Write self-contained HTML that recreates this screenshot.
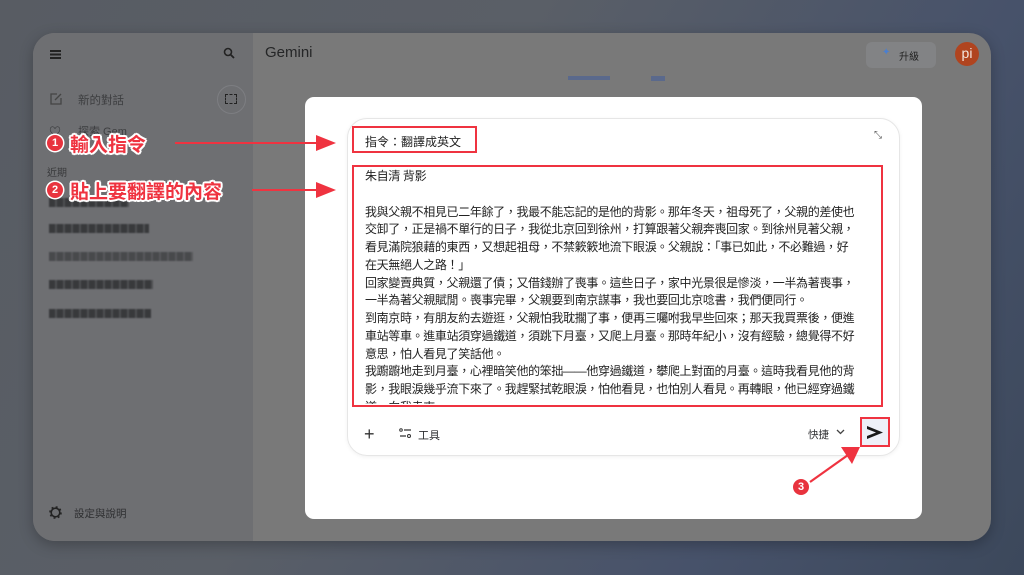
<!DOCTYPE html>
<html><head><meta charset="utf-8"><style>
*{margin:0;padding:0;box-sizing:border-box}
body{width:1024px;height:575px;overflow:hidden;position:relative;font-family:"Liberation Sans","Noto Sans CJK TC",sans-serif;background:linear-gradient(120deg,#585c63 0%,#5a5f67 40%,#47526a 75%,#3c485b 100%)}
.win{position:absolute;left:33px;top:33px;width:958px;height:508px;border-radius:22px;overflow:hidden;background:#797979;box-shadow:0 4px 14px rgba(0,0,0,.25)}
.side{position:absolute;left:0;top:0;width:220px;height:508px;background:#6e6f72}
.t{position:absolute;color:#2e2f31;font-size:11px}
.blur{position:absolute;height:9px;background:repeating-linear-gradient(90deg,#2f3032 0 6px,#4a4b4e 6px 8px);opacity:.85;filter:blur(.7px)}
.modal{position:absolute;left:305px;top:97px;width:617px;height:422px;background:#fff;border-radius:9px}
.card{position:absolute;left:347px;top:118px;width:553px;height:338px;border:1px solid #e6e6e6;border-radius:20px;box-shadow:0 1px 4px rgba(0,0,0,.06)}
.red{position:absolute;border:2px solid #ef3340}
.txt{position:absolute;left:365px;top:168px;font-size:12px;letter-spacing:-.35px;line-height:17.75px;color:#222;width:510px;height:236px;overflow:hidden;white-space:nowrap}
.ann{position:absolute;font-weight:bold;font-size:19px;color:#ef3340;text-shadow:0 0 2px #fff,1.5px 1.5px 0 #fff,-1.5px -1.5px 0 #fff,1.5px -1.5px 0 #fff,-1.5px 1.5px 0 #fff,0 2px 0 #fff,0 -2px 0 #fff,2px 0 0 #fff,-2px 0 0 #fff}
.num{position:absolute;width:16px;height:16px;border-radius:50%;background:#e8333e;color:#fff;font-size:11px;font-weight:bold;text-align:center;line-height:16px;box-shadow:0 0 0 1.5px #fff}
</style></head><body>
<div class="win">
 <div class="side">
  <div style="position:absolute;left:17px;top:17px;width:11px;height:1.5px;background:#222;box-shadow:0 3.5px 0 #222,0 7px 0 #222"></div>
  <svg style="position:absolute;left:190px;top:14px" width="12" height="12" viewBox="0 0 12 12"><circle cx="5" cy="5" r="3.5" fill="none" stroke="#222" stroke-width="1.6"/><path d="M7.5 7.5L11 11" stroke="#222" stroke-width="1.8"/></svg>
  <svg style="position:absolute;left:16px;top:59px" width="14" height="14" viewBox="0 0 14 14"><path d="M8 2H2v10h10V6" fill="none" stroke="#444" stroke-width="1.3"/><path d="M6 8l6-6" stroke="#444" stroke-width="1.3"/></svg>
  <div class="t" style="left:45px;top:59px;color:#3d3e40;font-size:11.5px">新的對話</div>
  <div style="position:absolute;left:184px;top:52px;width:29px;height:29px;border-radius:50%;border:1px solid #7d7e82"></div>
  <div style="position:absolute;left:192px;top:61px;width:12px;height:10px;border:1.5px dashed #222"></div>
  <div class="t" style="left:16px;top:90px;font-size:12px">♡</div>
  <div class="t" style="left:45px;top:90px;color:#3d3e40">探索 Gem</div>
  <div class="t" style="left:14px;top:131px;color:#38393b;font-size:10px">近期</div>
  <div class="blur" style="left:16px;top:165px;width:80px"></div>
  <div class="blur" style="left:16px;top:191px;width:100px"></div>
  <div class="blur" style="left:16px;top:219px;width:144px;opacity:.6"></div>
  <div class="blur" style="left:16px;top:247px;width:104px"></div>
  <div class="blur" style="left:16px;top:276px;width:102px"></div>
  <svg style="position:absolute;left:16px;top:473px" width="13" height="13" viewBox="0 0 13 13"><circle cx="6.5" cy="6.5" r="4.3" fill="none" stroke="#222" stroke-width="1.6"/><circle cx="6.5" cy="6.5" r="5.6" fill="none" stroke="#222" stroke-width="1.4" stroke-dasharray="2 2.4"/></svg>
  <div class="t" style="left:41px;top:473px;font-size:10.5px">設定與說明</div>
 </div>
 <div class="t" style="left:232px;top:11px;font-size:15px;color:#252627">Gemini</div>
 <div style="position:absolute;left:833px;top:9px;width:70px;height:26px;border-radius:6px;background:#828385"></div>
 <div class="t" style="left:849px;top:14px;font-size:10px;color:#4a7fd0">✦</div>
 <div class="t" style="left:866px;top:15px;font-size:10px;color:#222">升級</div>
 <div style="position:absolute;left:922px;top:9px;width:24px;height:24px;border-radius:50%;background:#b0441f;color:#f3e6de;font-size:14px;text-align:center;line-height:22px">pi</div>
 <div style="position:absolute;left:535px;top:43px;width:42px;height:4px;background:#3b5aa0;opacity:.5"></div>
 <div style="position:absolute;left:618px;top:43px;width:14px;height:5px;background:#3b5aa0;opacity:.5"></div>
</div>
<div class="modal"></div>
<div class="card"></div>
<div class="red" style="left:352px;top:126px;width:125px;height:27px"></div>
<div class="t" style="left:365px;top:133px;font-size:12px;color:#222">指令：翻譯成英文</div>
<div class="t" style="left:874px;top:130px;font-size:10px;color:#555">⤡</div>
<div class="red" style="left:352px;top:165px;width:531px;height:242px"></div>
<div class="txt">朱自清 背影<br><br>我與父親不相見已二年餘了，我最不能忘記的是他的背影。那年冬天，祖母死了，父親的差使也<br>交卸了，正是禍不單行的日子，我從北京回到徐州，打算跟著父親奔喪回家。到徐州見著父親，<br>看見滿院狼藉的東西，又想起祖母，不禁簌簌地流下眼淚。父親說：「事已如此，不必難過，好<br>在天無絕人之路！」<br>回家變賣典質，父親還了債；又借錢辦了喪事。這些日子，家中光景很是慘淡，一半為著喪事，<br>一半為著父親賦閒。喪事完畢，父親要到南京謀事，我也要回北京唸書，我們便同行。<br>到南京時，有朋友約去遊逛，父親怕我耽擱了事，便再三囑咐我早些回來；那天我買票後，便進<br>車站等車。進車站須穿過鐵道，須跳下月臺，又爬上月臺。那時年紀小，沒有經驗，總覺得不好<br>意思，怕人看見了笑話他。<br>我躕躕地走到月臺，心裡暗笑他的笨拙——他穿過鐵道，攀爬上對面的月臺。這時我看見他的背<br>影，我眼淚幾乎流下來了。我趕緊拭乾眼淚，怕他看見，也怕別人看見。再轉眼，他已經穿過鐵<br>道，向我走來。</div>
<div class="t" style="left:364px;top:424px;font-size:18px;color:#333;font-weight:300">+</div>
<svg style="position:absolute;left:399px;top:428px" width="13" height="11" viewBox="0 0 13 11"><circle cx="2" cy="2" r="1.3" fill="none" stroke="#333"/><path d="M5 2h7M1 8h6" stroke="#333" stroke-width="1.2"/><circle cx="10" cy="8" r="1.5" fill="none" stroke="#333"/></svg>
<div class="t" style="left:418px;top:427px;font-size:11px">工具</div>
<div class="t" style="left:808px;top:427px;font-size:10.5px">快捷</div>
<svg style="position:absolute;left:836px;top:429px" width="9" height="6" viewBox="0 0 9 6"><path d="M1 1l3.5 3.5L8 1" fill="none" stroke="#444" stroke-width="1.3"/></svg>
<div style="position:absolute;left:860px;top:417px;width:30px;height:30px;background:#eef0f8;border:2px solid #ef3340"></div>
<svg style="position:absolute;left:867px;top:426px" width="16" height="13" viewBox="0 0 16 13"><path d="M0 0L16 6.5L0 13L0 10L9 6.5L0 3Z" fill="#1a1a1a"/></svg>
<div class="num" style="left:47px;top:135px">1</div>
<div class="ann" style="left:70px;top:130px">輸入指令</div>
<div class="num" style="left:47px;top:182px">2</div>
<div class="ann" style="left:70px;top:177px">貼上要翻譯的內容</div>
<svg style="position:absolute;left:0;top:0" width="1024" height="575">
<path d="M175 143H318" stroke="#ef3340" stroke-width="2"/><path d="M316 135L336 143L316 151Z" fill="#ef3340"/>
<path d="M252 190H318" stroke="#ef3340" stroke-width="2"/><path d="M316 182L336 190L316 198Z" fill="#ef3340"/>
<path d="M810 482L848 455" stroke="#ef3340" stroke-width="2.2"/><path d="M841 447L860 447L852 464Z" fill="#ef3340"/>
</svg>
<div class="num" style="left:793px;top:479px">3</div>
</body></html>
